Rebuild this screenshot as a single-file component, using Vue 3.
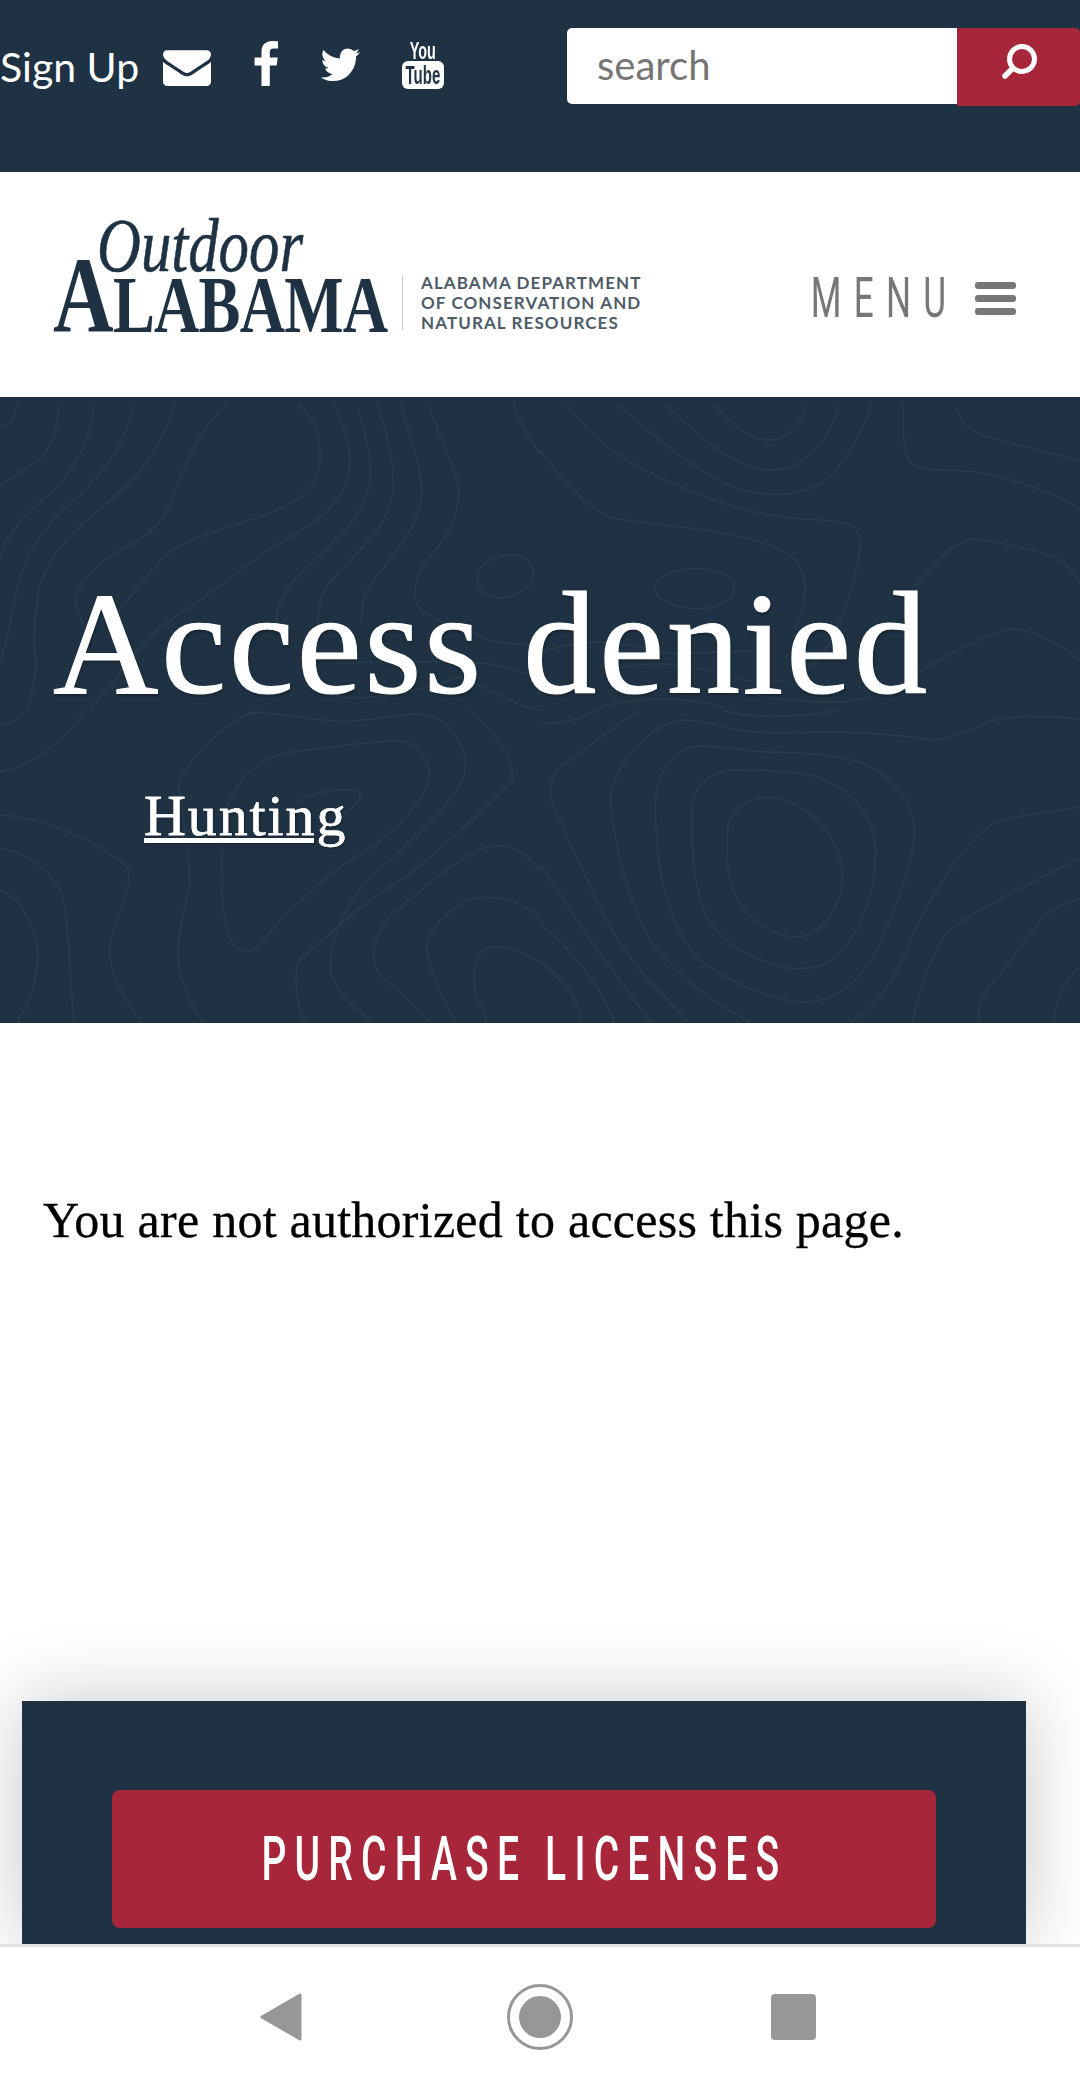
<script setup>
const quadrants = [
  {
    at: 'translate(0 0)',
    paths: [
      'M50 20 C45 60,30 85,0 88',
      'M170 20 C170 90,150 170,90 205 C60 225,30 245,0 265',
      'M272 20 C265 100,250 170,170 265 C90 340,20 400,0 480',
      'M390 20 C370 130,310 220,220 305 C110 400,60 500,45 600 C30 680,20 740,0 790',
      'M510 20 C470 130,430 210,350 285 C220 390,130 480,110 590 C100 680,95 740,105 800 C100 860,90 900,80 939',
      'M660 20 C590 80,560 160,520 250 C490 340,470 380,410 425 C330 470,240 520,222 600 C215 640,230 660,250 690',
      'M865 20 C910 60,930 110,930 170 C930 260,900 300,780 350 C700 380,560 420,500 460 C460 490,400 570,340 650',
      'M968 20 C1000 90,1020 140,1015 210 C1000 330,900 390,800 445 C700 510,620 590,520 650 C450 700,390 760,340 840 L260 939',
      'M1038 30 C1060 110,1080 180,1075 250 C1060 350,1000 410,900 500 C840 560,800 610,802 680',
      'M1092 20 C1120 90,1145 190,1142 270 C1130 390,1060 440,980 530 C940 570,920 620,925 680',
      'M1162 20 C1190 120,1225 200,1225 290 C1215 380,1170 440,1100 530 C1060 580,1045 620,1050 680',
      'M1245 20 C1260 90,1320 200,1332 270 C1335 360,1300 420,1240 490 C1205 540,1195 590,1212 625 C1240 670,1340 690,1420 730 C1480 745,1530 740,1568 745',
      'M1470 475 C1510 465,1550 490,1550 530 C1545 580,1480 610,1430 600 C1390 590,1375 545,1395 515 C1415 490,1440 480,1470 475Z',
      'M1490 20 C1510 80,1540 130,1568 170',
      'M960 800 C1100 790,1300 790,1420 800 C1480 815,1530 830,1568 835',
      'M950 890 C1050 920,1200 890,1330 840 C1400 860,1500 930,1568 939'
    ]
  },
  {
    at: 'translate(1568 0)',
    paths: [
      'M0 160 C50 230,110 310,200 360 C300 385,500 390,620 430 C720 460,770 490,768 570 C770 620,760 650,740 700',
      'M500 20 C550 70,600 125,660 130 C710 130,760 90,775 25',
      'M360 20 C430 80,520 190,640 215 C730 235,820 180,870 25',
      'M222 20 C300 90,430 210,560 270 C650 300,760 310,840 240 C900 180,940 90,965 20',
      'M75 20 C130 90,180 150,280 205 C400 270,540 330,650 350 C730 370,860 365,905 385 C935 405,930 450,925 490 C910 560,880 650,860 700 C830 770,790 810,750 830',
      'M450 515 C520 515,565 540,565 572 C565 610,510 638,450 635 C390 632,335 610,332 575 C332 540,380 515,450 515Z',
      'M1055 20 C1055 80,1050 160,1075 195 C1100 225,1170 215,1270 225 C1380 250,1490 280,1568 340',
      'M1205 30 C1220 70,1250 105,1300 120 C1380 140,1480 170,1568 190',
      'M1090 570 C1130 520,1190 440,1250 425 C1320 430,1440 460,1490 480 C1530 500,1550 530,1568 560',
      'M1100 825 C1170 780,1270 720,1370 695 C1440 700,1520 750,1568 790',
      'M0 770 C100 720,230 730,380 770 L650 760',
      'M180 830 C280 790,380 790,530 830 C600 860,660 860,720 850',
      'M170 930 C250 910,400 890,530 930',
      'M620 890 C700 910,860 930,960 900 C1000 890,1050 860,1100 825'
    ]
  },
  {
    at: 'translate(0 939)',
    paths: [
      'M0 50 C30 40,60 20,80 0',
      'M0 185 C60 175,160 130,250 0',
      'M0 315 C120 320,280 390,370 470 C390 530,340 600,320 700 C310 780,350 850,410 935',
      'M0 415 C100 430,180 510,190 600 C200 700,205 830,215 935',
      'M0 540 C70 570,105 660,110 740 C105 830,80 890,50 935',
      'M750 0 C660 30,540 150,520 220 C525 300,555 440,550 530 C530 620,510 680,520 780 C540 850,565 900,590 935',
      'M1360 0 C1430 60,1490 130,1488 210 C1430 280,1320 380,1180 500 C1060 570,950 680,870 750 C850 790,860 880,885 935',
      'M720 10 C780 0,880 30,1000 35 C1100 30,1200 0,1260 20 C1320 50,1360 120,1350 190 C1320 280,1200 390,1100 480 C1010 560,960 680,960 770 C960 830,1010 880,1080 935',
      'M660 290 C690 200,760 140,850 125 C950 115,1100 90,1160 90 C1220 100,1250 160,1245 210 C1220 300,1100 410,1000 460 C900 540,800 640,750 710 C720 730,690 730,670 690 C640 630,645 500,645 400',
      'M860 280 C900 250,960 235,1040 240 C1060 260,1030 290,1000 310',
      'M1568 480 C1520 420,1470 390,1400 415 C1320 450,1200 560,1130 620 C1080 690,1075 740,1100 790 C1150 840,1210 890,1250 935',
      'M1568 620 C1500 570,1440 550,1360 570 C1290 610,1240 660,1240 720 C1245 790,1290 860,1320 935',
      'M1568 760 C1510 720,1450 700,1410 715 C1375 740,1365 800,1385 860 L1415 935'
    ]
  },
  {
    at: 'translate(1568 939)',
    paths: [
      'M0 38 C50 45,110 30,170 0',
      'M0 460 C50 540,120 650,180 740 C240 820,280 880,320 935',
      'M0 640 C90 720,180 830,215 935',
      'M0 755 C60 800,110 860,120 935',
      'M290 0 C200 60,120 130,60 170 C30 200,25 240,35 280 C80 380,150 550,220 680 C280 780,360 860,430 935',
      'M530 0 C600 25,760 25,870 0',
      'M1568 30 C1500 15,1400 15,1320 30 C1260 50,1200 90,1140 90 C1040 75,960 65,800 65 C700 70,600 70,550 55 C500 40,450 30,415 30 C320 40,200 170,205 290 C220 420,250 560,320 690 C390 790,500 880,610 935',
      'M450 108 C520 105,580 120,650 125 C760 130,880 130,960 170 C1040 220,1085 280,1088 370 C1080 470,1040 570,1000 670 C960 780,880 870,770 878 C680 870,580 830,490 770 C400 700,360 570,345 450 C335 350,330 280,340 230 C360 160,400 120,450 108Z',
      'M550 180 C620 180,700 180,780 195 C880 215,970 300,975 420 C975 540,940 640,880 720 C840 770,780 780,720 775 C620 750,520 700,480 610 C450 530,440 450,440 300 C445 230,490 190,550 180Z',
      'M660 262 C760 262,870 370,878 490 C880 590,820 680,740 682 C650 670,580 610,555 520 C540 470,542 400,545 350 C555 300,600 265,660 262Z',
      'M1080 935 C1110 830,1130 730,1190 660 C1250 610,1400 530,1568 445',
      'M900 935 C1000 880,1040 780,1090 660 C1150 530,1220 420,1300 350 C1370 310,1480 310,1568 290',
      'M1275 935 C1270 870,1300 830,1340 790 C1400 710,1450 610,1510 590 L1568 565',
      'M1490 935 C1500 860,1530 800,1568 770'
    ]
  }
]
</script>

<template>
  <div class="page">
    <div class="topbar">
      <div class="social">
        <a class="signup">Sign Up</a>
        <svg class="i-mail" viewBox="0 128 1792 1536" preserveAspectRatio="none"><path d="M1792 710v794q0 66-47 113t-113 47h-1472q-66 0-113-47t-47-113v-794q44 49 101 87 362 246 497 345 57 42 92.5 65.5t94.5 48 110 24.5h2q51 0 110-24.5t94.5-48 92.5-65.5q170-123 498-345 57-39 100-87zm0-294q0 79-49 151t-122 123q-376 261-468 325-10 7-42.5 30.5t-54 38-52 32.5-57.5 27-50 9h-2q-23 0-50-9t-57.5-27-52-32.5-54-38-42.5-30.5q-91-64-262-182.5t-205-142.5q-62-42-117-115.5t-55-136.5q0-78 41.5-130t118.5-52h1472q65 0 112.5 47t47.5 113z"/></svg>
        <svg class="i-fb" viewBox="383 0 960 1664" preserveAspectRatio="none"><path d="M1343 12v264h-157q-86 0-116 36t-30 108v189h293l-39 296h-254v759h-306v-759h-255v-296h255v-218q0-186 104-288.5t277-102.5q147 0 228 12z"/></svg>
        <svg class="i-tw" viewBox="0 240 1684 1370" preserveAspectRatio="none"><path d="M1684 408q-67 98-162 167 1 14 1 42 0 130-38 259.5t-115.5 248.5-184.5 210.5-258 146-323 54.5q-271 0-496-145 35 4 78 4 225 0 401-138-105-2-188-64.5t-114-159.5q33 5 61 5 43 0 85-11-112-23-185.5-111.5t-73.5-205.5v-4q68 38 146 41-66-44-105-115t-39-154q0-88 44-163 121 149 294.5 238.5t371.5 99.5q-8-38-8-74 0-134 94.5-228.5t228.5-94.5q140 0 236 102 109-21 205-78-37 115-142 178 97-11 194-53z"/></svg>
        <div class="i-yt"><span class="yt-you">You</span><span class="yt-tube"><b>Tube</b></span></div>
      </div>
      <div class="search">
        <div class="search-input">search</div>
        <button class="search-btn" aria-label="Search">
          <svg width="44" height="44" viewBox="0 0 44 44"><circle cx="25" cy="19" r="12.5" fill="none" stroke="#fff" stroke-width="5"/><path d="M15.5 28.5L8 36" stroke="#fff" stroke-width="5.5" stroke-linecap="round"/></svg>
        </button>
      </div>
    </div>

    <header class="header">
      <div class="logo">
        <div class="logo-main">
          <div class="logo-outdoor">Outdoor</div>
          <div class="logo-alabama"><span class="big-a">A</span>LABAMA</div>
        </div>
        <div class="logo-rule"></div>
        <div class="logo-dept">ALABAMA DEPARTMENT<br>OF CONSERVATION AND<br>NATURAL RESOURCES</div>
      </div>
      <div class="menu">
        <span class="menu-text">MENU</span>
        <span class="burger"><i></i><i></i><i></i></span>
      </div>
    </header>

    <section class="hero">
      <svg class="topo" viewBox="0 0 3136 1878" preserveAspectRatio="none" aria-hidden="true">
        <g v-for="(q, k) in quadrants" :key="k" :transform="q.at">
          <path v-for="(d, n) in q.paths" :key="n" :d="d" vector-effect="non-scaling-stroke"/>
        </g>
      </svg>
      <h1>Access denied</h1>
      <a class="crumb">Hunting</a>
    </section>

    <main class="main">
      <p>You are not authorized to access this page.</p>
    </main>

    <aside class="panel">
      <a class="cta"><span>PURCHASE LICENSES</span></a>
    </aside>

    <nav class="navbar">
      <svg width="44" height="50" viewBox="0 0 44 50"><path d="M41 3V47L3 25Z" fill="#979797" stroke="#979797" stroke-width="3" stroke-linejoin="round"/></svg>
      <svg width="68" height="68" viewBox="0 0 68 68"><circle cx="34" cy="34" r="31.5" fill="none" stroke="#979797" stroke-width="3"/><circle cx="34" cy="34" r="21" fill="#979797"/></svg>
      <div class="nav-square"></div>
    </nav>
  </div>
</template>

<style>
html, body { margin: 0; background: #fff; }
</style>

<style scoped>
.page { width: 1080px; height: 2087px; overflow: hidden; font-family: "Liberation Serif", serif; background: #fff; }

.topbar { height: 172px; background: #1f3243; display: flex; justify-content: space-between; align-items: flex-start; box-sizing: border-box; padding-top: 28px; }
.social { display: flex; align-items: flex-start; color: #fff; }
.signup { font: 400 41px/48px Lato, sans-serif; margin-top: 15px; width: 163px; }
.social svg { fill: #fff; display: block; }
.i-mail { width: 48px; height: 39px; margin-top: 19px; }
.i-fb { width: 26px; height: 45px; margin: 13px 0 0 41px; }
.i-tw { width: 42px; height: 35px; margin: 20px 0 0 40px; }
.i-yt { width: 42px; height: 49px; margin: 12px 0 0 42px; display: flex; flex-direction: column; align-items: center; font-family: "Liberation Sans", sans-serif; font-weight: 700; }
.yt-you { font-size: 24px; line-height: 21px; height: 21px; transform: scaleX(.6); }
.yt-tube { width: 42px; height: 28px; background: #fff; color: #1f3243; border-radius: 6px; font-size: 25px; line-height: 28px; display: flex; justify-content: center; overflow: hidden; }
.yt-tube b { display: block; transform: scaleX(.6); white-space: nowrap; letter-spacing: 0; }

.search { display: flex; align-items: flex-start; }
.search-input { width: 390px; height: 76px; box-sizing: border-box; background: #fff; border-radius: 5px 0 0 5px; padding-left: 30px; font: 400 40px/74px Lato, sans-serif; color: #757575; }
.search-btn { width: 123px; height: 78px; border: 0; padding: 0; background: #a82639; border-radius: 0 5px 5px 0; display: flex; align-items: flex-start; justify-content: flex-start; }
.search-btn svg { margin: 12px 0 0 40px; }

.header { height: 225px; display: flex; background: #fff; box-sizing: border-box; justify-content: space-between; }
.logo { display: flex; padding: 41px 0 0 53px; color: #1f3243; }
.logo-main { width: 349px; }
.logo-outdoor { font: italic 400 76px/64px "Liberation Serif", serif; -webkit-text-stroke: .6px #1f3243; transform: scaleX(.8); transform-origin: 0 0; margin-left: 44px; height: 48px; white-space: nowrap; }
.logo-alabama { font: 700 80px/70px "Liberation Serif", serif; transform: scaleX(.785); transform-origin: 0 0; white-space: nowrap; letter-spacing: -1px; }
.big-a { font-size: 107px; line-height: 70px; }
.logo-rule { width: 1px; height: 55px; background: #c6ccd1; margin-top: 62px; }
.logo-dept { font: 700 17px/20px Lato, sans-serif; letter-spacing: 1.1px; color: #4e5c68; margin: 60px 0 0 18px; white-space: nowrap; }
.menu { display: flex; padding: 97px 64px 0 0; color: #777; }
.menu-text { font: 400 55px/58px Roboto, sans-serif; letter-spacing: 19px; transform: scaleX(.64); transform-origin: 100% 0; margin-right: 17px; height: 58px; white-space: nowrap; margin-left: -60px; }
.burger { width: 41px; display: flex; flex-direction: column; gap: 6px; padding-top: 13px; }
.burger i { display: block; height: 7px; border-radius: 3px; background: #777; }

.hero { position: relative; height: 626px; overflow: hidden; background: #1f3243; box-sizing: border-box; padding-top: 167px; color: #fff; }
.topo { position: absolute; left: 0; top: 0; width: 1080px; height: 626px; }
.topo path { fill: none; stroke: rgba(255,255,255,.04); stroke-width: 2; }
h1 { position: relative; margin: 0 0 57px 53px; font: 400 146px/160px "Liberation Serif", serif; letter-spacing: 2.9px; -webkit-text-stroke: 1.2px #fff; text-shadow: 1px 2px 3px rgba(0,0,0,.35); white-space: nowrap; }
.crumb { position: relative; display: block; margin-left: 144px; font: 400 58px/70px "Liberation Serif", serif; letter-spacing: 1.9px; -webkit-text-stroke: .4px #fff; text-decoration: underline; text-decoration-thickness: 5px; text-underline-offset: 3px; text-shadow: 1px 1px 3px rgba(0,0,0,.35); }

.main { height: 678px; box-sizing: border-box; padding: 167px 0 0 43px; }
.main p { margin: 0; font: 400 50px/60px "Liberation Serif", serif; letter-spacing: .25px; -webkit-text-stroke: .3px #000; color: #000; white-space: nowrap; }

.panel { position: relative; height: 243px; margin: 0 54px 0 22px; box-sizing: border-box; padding: 89px 90px 0; background: #1f3243; box-shadow: 0 0 70px rgba(0,0,0,.22); }
.cta { display: flex; justify-content: center; align-items: center; height: 138px; background: #a82639; border-radius: 8px; color: #fff; }
.cta span { font: 500 62px/70px Roboto, sans-serif; letter-spacing: 13px; transform: scaleX(.63); white-space: nowrap; }

.navbar { position: relative; height: 143px; box-sizing: border-box; border-top: 3px solid #e2e2e2; background: #fff; display: flex; align-items: center; padding-left: 259px; padding-bottom: 1px; }
.navbar svg:nth-child(2) { margin-left: 203px; }
.nav-square { width: 45px; height: 46px; border-radius: 4px; background: #979797; margin-left: 197px; }
</style>
